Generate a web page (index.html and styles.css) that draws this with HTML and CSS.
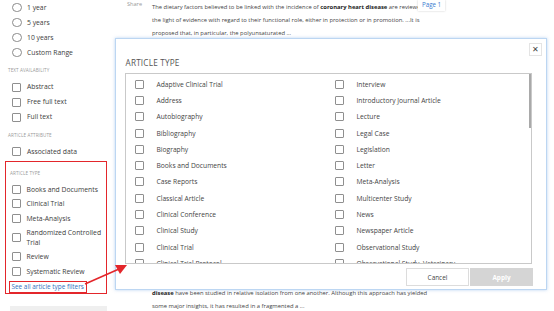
FILE: index.html
```html
<!DOCTYPE html>
<html lang="en">
<head>
  <meta charset="UTF-8">
  <title>Article type filters</title>
  <link rel="stylesheet" href="styles.css">
</head>
<body>
  <div class="page">
    <aside class="sidebar">
      <ul class="filter-list">
        <li class="filter-item"><span class="radio"></span>1 year</li>
        <li class="filter-item"><span class="radio"></span>5 years</li>
        <li class="filter-item"><span class="radio"></span>10 years</li>
        <li class="filter-item"><span class="radio"></span>Custom Range</li>
      </ul>

      <h4 class="filter-title">Text availability</h4>
      <ul class="filter-list">
        <li class="filter-item"><span class="box"></span>Abstract</li>
        <li class="filter-item"><span class="box"></span>Free full text</li>
        <li class="filter-item"><span class="box"></span>Full text</li>
      </ul>

      <h4 class="filter-title">Article attribute</h4>
      <ul class="filter-list">
        <li class="filter-item"><span class="box"></span>Associated data</li>
      </ul>

      <div class="filter-group marked">
        <h4 class="filter-title">Article type</h4>
        <ul class="filter-list">
          <li class="filter-item"><span class="box"></span>Books and Documents</li>
          <li class="filter-item"><span class="box"></span>Clinical Trial</li>
          <li class="filter-item"><span class="box"></span>Meta-Analysis</li>
          <li class="filter-item"><span class="box"></span>Randomized Controlled Trial</li>
          <li class="filter-item"><span class="box"></span>Review</li>
          <li class="filter-item"><span class="box"></span>Systematic Review</li>
        </ul>
        <a class="see-all" href="#">See all article type filters</a>
      </div>

      <div class="sidebar-bar"></div>
    </aside>

    <main class="results">
      <div class="result">
        <span class="share">Share</span>
        <p class="snippet">The dietary factors believed to be linked with the incidence of <b>coronary heart disease</b> are reviewed in<br>the light of evidence with regard to their functional role, either in protection or in promotion. ...It is<br>proposed that, in particular, the polyunsaturated ...</p>
      </div>
      <div class="result later">
        <span class="share"></span>
        <p class="snippet"><b>disease</b> have been studied in relative isolation from one another. Although this approach has yielded<br>some major insights, it has resulted in a fragmented a ...</p>
      </div>
      <span class="page-badge">Page 1</span>
    </main>

    <div class="modal">
      <button class="close" type="button">&#x2715;</button>
      <h3 class="modal-title">Article type</h3>
      <div class="type-box">
        <ul class="type-col">
          <li><span class="box"></span>Adaptive Clinical Trial</li>
          <li><span class="box"></span>Address</li>
          <li><span class="box"></span>Autobiography</li>
          <li><span class="box"></span>Bibliography</li>
          <li><span class="box"></span>Biography</li>
          <li><span class="box"></span>Books and Documents</li>
          <li><span class="box"></span>Case Reports</li>
          <li><span class="box"></span>Classical Article</li>
          <li><span class="box"></span>Clinical Conference</li>
          <li><span class="box"></span>Clinical Study</li>
          <li><span class="box"></span>Clinical Trial</li>
          <li><span class="box"></span>Clinical Trial Protocol</li>
        </ul>
        <ul class="type-col">
          <li><span class="box"></span>Interview</li>
          <li><span class="box"></span>Introductory Journal Article</li>
          <li><span class="box"></span>Lecture</li>
          <li><span class="box"></span>Legal Case</li>
          <li><span class="box"></span>Legislation</li>
          <li><span class="box"></span>Letter</li>
          <li><span class="box"></span>Meta-Analysis</li>
          <li><span class="box"></span>Multicenter Study</li>
          <li><span class="box"></span>News</li>
          <li><span class="box"></span>Newspaper Article</li>
          <li><span class="box"></span>Observational Study</li>
          <li><span class="box"></span>Observational Study, Veterinary</li>
        </ul>
        <span class="scroll-thumb"></span>
      </div>
      <div class="modal-footer">
        <button class="btn cancel" type="button">Cancel</button>
        <button class="btn apply" type="button">Apply</button>
      </div>
    </div>

    <svg class="arrow" width="50" height="26" viewBox="0 0 50 26">
      <line x1="2" y1="23" x2="36" y2="8" stroke="#e3262b" stroke-width="1.6"/>
      <polygon points="44,4 32,4 37,13" fill="#e3262b"/>
    </svg>
  </div>
</body>
</html>
```

FILE: styles.css
```css
* {
  box-sizing: border-box;
}
body {
  margin: 0;
  font-family: "Open Sans", "Noto Sans", sans-serif;
  background: white;
  color: #444;
}
.page {
  position: relative;
  width: 554px;
  height: 311px;
  overflow: hidden;
  display: flex;
}

/* left filters */
.sidebar {
  width: 115px;
  flex: none;
  padding: 0 8px 0 5px;
}
ul {
  list-style: none;
  margin: 0;
  padding: 0;
}
.filter-item {
  display: flex;
  align-items: center;
  padding: 2.75px 0 2.75px 7px;
  line-height: 9.5px;
  font-size: 6.8px;
  color: #3d3d3d;
}
.radio {
  flex: none;
  width: 9.5px;
  height: 9.5px;
  border: 1px solid #8a8a8a;
  border-radius: 50%;
  margin-right: 5.5px;
}
.box {
  flex: none;
  width: 9px;
  height: 9px;
  border: 1px solid #8f8f8f;
  border-radius: 1px;
  margin-right: 6px;
}
.filter-title {
  margin: 5px 0 4.5px 3px;
  font-size: 4.6px;
  line-height: 10px;
  font-weight: normal;
  text-transform: uppercase;
  letter-spacing: 0.1px;
  color: #9a9a9a;
}
.filter-group.marked {
  margin-top: 1.5px;
  border: 1.5px solid #e3262b;
  padding: 2px 0 0.5px 0;
}
.marked .filter-title {
  margin: 4.5px 0 4px 4px;
}
.marked .filter-item {
  padding: 2.5px 0 2.5px 5.5px;
}
.see-all {
  display: block;
  width: fit-content;
  margin: 2px 0 0 2.5px;
  padding: 1px 2px;
  border: 1.5px solid #e3262b;
  font-size: 6.4px;
  line-height: 8px;
  color: #2e73c0;
  text-decoration: none;
}
.sidebar-bar {
  margin: 12px 0 0 5px;
  height: 6px;
  background: #efefef;
}

/* results behind the dialog */
.results {
  position: relative;
  flex: 1;
  padding: 0 0 0 12px;
}
.result {
  display: flex;
}
.share {
  width: 25px;
  flex: none;
  font-size: 5.6px;
  color: #999;
  line-height: 9px;
}
.snippet {
  margin: 1px 0 0;
  font-size: 5.85px;
  line-height: 13px;
  color: #444;
}
.snippet b {
  color: #222;
}
.result.later {
  margin-top: 246px;
}
.page-badge {
  position: absolute;
  top: 0;
  left: 303px;
  padding: 0 4px 1px;
  font-size: 6.2px;
  line-height: 10px;
  color: #3b7bd0;
  background: white;
  box-shadow: 0 0 2px rgba(0, 0, 0, 0.2);
}

/* dialog */
.modal {
  position: absolute;
  left: 115px;
  top: 38px;
  width: 432px;
  height: 252px;
  background: white;
  border: 1.5px solid #bcd6f2;
  box-shadow: 0 0 3px rgba(120, 170, 230, 0.5);
  padding: 14px 14px 0 8.5px;
}
.close {
  position: absolute;
  top: 4px;
  right: 4px;
  width: 13px;
  height: 13px;
  padding: 0;
  border: 1px solid #e4e4e4;
  background: white;
  color: #444;
  font-size: 7.5px;
  line-height: 11px;
}
.modal-title {
  margin: 5px 0 5px 1px;
  font-size: 8.2px;
  line-height: 10px;
  font-weight: normal;
  letter-spacing: 0.2px;
  text-transform: uppercase;
  color: #555;
}
.type-box {
  position: relative;
  display: flex;
  height: 191px;
  overflow: hidden;
  border: 1px solid #c9c9c9;
  padding: 2px 0 0 9px;
}
.type-col {
  width: 200px;
  flex: none;
}
.type-col li {
  display: flex;
  align-items: center;
  height: 16.3px;
  font-size: 6.7px;
  color: #444;
}
.type-col .box {
  margin-right: 13px;
}
.scroll-thumb {
  position: absolute;
  top: 0;
  right: 0;
  width: 2px;
  height: 54px;
  background: #a9a9a9;
}
.modal-footer {
  display: flex;
  justify-content: flex-end;
  gap: 1px;
  padding: 4px 0 0;
  margin-right: -1px;
}
.btn {
  width: 63px;
  height: 18px;
  font-family: inherit;
  font-size: 6.4px;
  border: 1px solid #dcdcdc;
  background: white;
  color: #444;
}
.btn.apply {
  border-color: #d5d5d5;
  background: #d5d5d5;
  color: white;
  font-weight: bold;
}

.arrow {
  position: absolute;
  left: 83px;
  top: 261px;
}
```
